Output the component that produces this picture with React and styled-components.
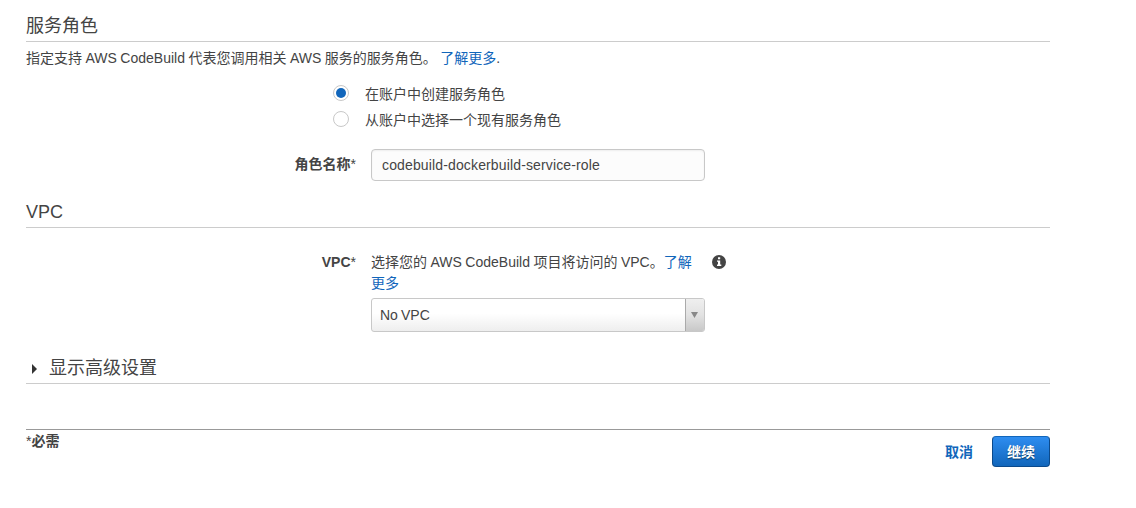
import React from 'react';
import styled, { createGlobalStyle, css } from 'styled-components';

const Global = createGlobalStyle`
  * { box-sizing: border-box; }
  body {
    margin: 0;
    background: #fff;
    color: #444;
    font: 14px/21px "Liberation Sans", "Noto Sans CJK SC", sans-serif;
  }
`;

const Page = styled.main`
  width: 1024px;
  margin-left: 26px;
  padding-top: 11px;
`;

const Heading = styled.h2`
  display: flex;
  align-items: center;
  height: 31px;
  margin: ${p => p.$top || 0}px 0 0;
  border-bottom: 1px solid #ccc;
  font-size: 18px;
  font-weight: 400;
  line-height: 30px;
`;

const Link = styled.a`
  color: #1166bb;
  text-decoration: none;
  ${p => p.$bold && css`
    padding-top: 1px;
    font-weight: 700;
  `}
`;

const Intro = styled.p`
  margin: 6px 0 0;
  height: 21px;
  white-space: nowrap;
  word-spacing: -0.4px;
`;

const Options = styled.div`
  display: flex;
  flex-direction: column;
  gap: 5px;
  margin: 15px 0 0 307px;
`;

const Option = styled.label`
  display: flex;
  align-items: flex-start;
  gap: 16px;
  height: 21px;
`;

const Radio = styled.span`
  display: grid;
  place-items: center;
  width: 16px;
  height: 16px;
  margin-top: 1px;
  border: 1px solid #c8c8c8;
  border-radius: 50%;
  &::after {
    content: '';
    width: 10px;
    height: 10px;
    border-radius: 50%;
    background: ${p => (p.$on ? '#1166bb' : 'transparent')};
  }
`;

const Field = styled.div`
  display: grid;
  grid-template-columns: 330px 334px auto;
  column-gap: 15px;
  margin-top: ${p => p.$top}px;
`;

const Label = styled.div`
  margin-top: ${p => p.$top || 0}px;
  text-align: right;
  font-weight: 700;
`;

const Star = styled.span`
  font-weight: 400;
`;

const Input = styled.input`
  width: 334px;
  height: 32px;
  padding: 0 10px;
  border: 1px solid #c8c8c8;
  border-radius: 4px;
  background: #fcfcfc;
  box-shadow: inset 0 1px 2px #eee;
  color: #444;
  font: inherit;
  letter-spacing: 0.14px;
`;

const Hint = styled.div`
  word-spacing: -0.4px;
`;

const Select = styled.div`
  display: flex;
  justify-content: space-between;
  height: 34px;
  margin-top: 4px;
  border: 1px solid #c8c8c8;
  border-radius: 3px;
  background: linear-gradient(#fff 45%, #eee);
  line-height: 32px;
  padding-left: 8px;
  overflow: hidden;
  word-spacing: -0.8px;
`;

const Arrow = styled.span`
  display: grid;
  place-items: center;
  width: 19px;
  padding-right: 1px;
  border-left: 1px solid #aaa;
  background: linear-gradient(#efefef, #e2e2e2 50%, #c8c8c8);
`;

const Info = styled.svg`
  margin: 3px 0 0 -8px;
`;

const Caret = styled.svg`
  margin: 2px 12px 0 6px;
`;

const Footer = styled.footer`
  display: flex;
  justify-content: space-between;
  margin-top: 45px;
  border-top: 1px solid #999;
`;

const Required = styled.div`
  padding-top: 1px;
  font-weight: 700;
`;

const Actions = styled.div`
  display: flex;
  align-items: center;
  gap: 19px;
  margin-top: 6px;
`;

const Button = styled.button`
  width: 58px;
  height: 31px;
  padding: 2px 0 0;
  border: 1px solid #0b4a8c;
  border-top-color: #1166bb;
  border-radius: 4px;
  background: linear-gradient(#2e8df0, #1166bb);
  color: #fff;
  font: inherit;
  font-weight: 700;
  text-shadow: 0 1px 1px #073763;
`;

export default function App() {
  return (
    <Page>
      <Global />
      <Heading>服务角色</Heading>
      <Intro>指定支持 AWS CodeBuild 代表您调用相关 AWS 服务的服务角色。 <Link>了解更多</Link>.</Intro>
      <Options>
        <Option><Radio $on />在账户中创建服务角色</Option>
        <Option><Radio />从账户中选择一个现有服务角色</Option>
      </Options>
      <Field $top={18}>
        <Label $top={5}>角色名称<Star>*</Star></Label>
        <Input defaultValue="codebuild-dockerbuild-service-role" />
      </Field>
      <Heading $top={16}>VPC</Heading>
      <Field $top={24}>
        <Label>VPC<Star>*</Star></Label>
        <div>
          <Hint>选择您的 AWS CodeBuild 项目将访问的 VPC。<Link>了解<br />更多</Link></Hint>
          <Select>
            No VPC
            <Arrow><svg width="7" height="6"><path d="M0 0h7L3.500 6z" fill="#888" /></svg></Arrow>
          </Select>
        </div>
        <Info width="14" height="14" viewBox="0 0 14 14">
          <circle cx="7" cy="7" r="7" fill="#444" />
          <path d="M6 2.200h2.200v2H6zM5 5.400h3.200v4.200H9.300V11H5V9.600h1V6.800H5z" fill="#fff" />
        </Info>
      </Field>
      <Heading $top={21}>
        <Caret width="5" height="10"><path d="M0 0l5 5-5 5z" fill="#333" /></Caret>
        显示高级设置
      </Heading>
      <Footer>
        <Required><Star>*</Star>必需</Required>
        <Actions>
          <Link $bold>取消</Link>
          <Button>继续</Button>
        </Actions>
      </Footer>
    </Page>
  );
}
